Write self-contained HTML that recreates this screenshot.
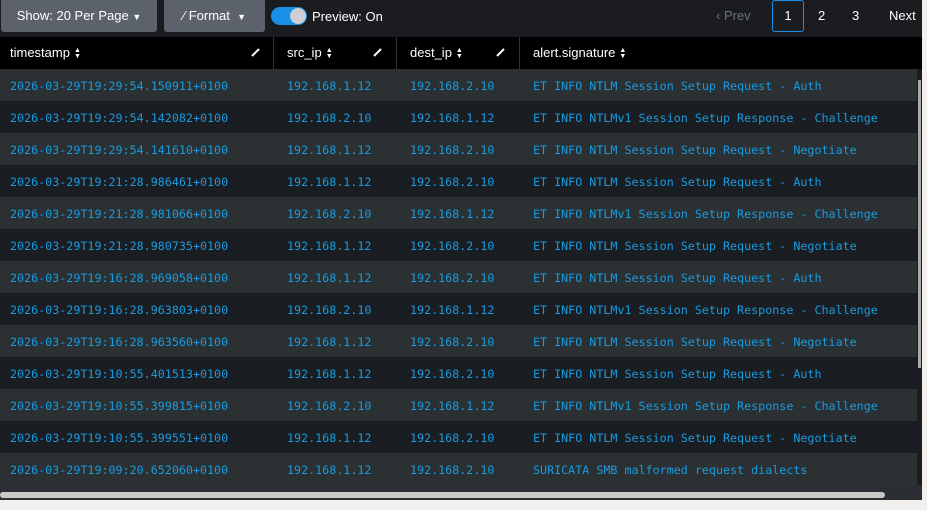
<!DOCTYPE html><html><head><style>
body{margin:0;width:927px;height:510px;background:#f2f0ee;overflow:hidden;font-family:"Liberation Sans",sans-serif}
#w{position:absolute;left:0;top:0;width:922px;height:500px;background:#1a1c20}
.btn{position:absolute;top:0;height:32px;background:#5b626b;border-radius:0 0 3px 3px;color:#fff;font-size:13px;line-height:32px;text-align:center}
#hd{position:absolute;top:37px;left:0;width:922px;height:32px;background:#000;color:#fff;font-size:13px}
.h{position:absolute;top:0;height:32px;line-height:32px;border-right:1px solid #333}
.r{position:absolute;left:0;width:917px;height:32px;font-family:"DejaVu Sans Mono","Liberation Mono",monospace;font-size:11.7px;color:#1a9be0;line-height:34px}
.r span{position:absolute}
.pen{position:absolute;top:10px;width:10px;height:10px}
.s{display:inline-block;vertical-align:middle;margin-left:4px;font-size:7px;line-height:6px}
</style></head><body><div id="w">
<div class="btn" style="left:1px;width:156px">Show: 20 Per Page <span style="font-size:9px">▼</span></div>
<div class="btn" style="left:164px;width:101px">⁄ Format &nbsp;<span style="font-size:9px">▼</span></div>
<div style="position:absolute;left:271px;top:7px;width:36px;height:18px;border-radius:9px;background:#1a8fe8"></div>
<div style="position:absolute;left:290px;top:8px;width:16px;height:16px;border-radius:8px;background:#ccd0d4"></div>
<div style="position:absolute;left:312px;top:9px;color:#fff;font-size:13px">Preview: On</div>
<div style="position:absolute;left:716px;top:8px;color:#6b7079;font-size:13px">‹ Prev</div>
<div style="position:absolute;left:772px;top:0;width:30px;height:30px;border:1px solid #1a8fe8;border-radius:3px;color:#fff;font-size:13px;line-height:30px;text-align:center">1</div>
<div style="position:absolute;left:818px;top:8px;color:#fff;font-size:13px">2</div>
<div style="position:absolute;left:852px;top:8px;color:#fff;font-size:13px">3</div>
<div style="position:absolute;left:889px;top:8px;color:#fff;font-size:13px">Next</div>
<div id="hd">
<div class="h" style="left:0;width:273px"><span style="margin-left:10px">timestamp</span><span class="s">▲<br>▼</span><svg class="pen" style="left:251px" viewBox="0 0 10 10"><path d="M1 9L8 2" stroke="#fff" stroke-width="2"/></svg></div>
<div class="h" style="left:274px;width:122px"><span style="margin-left:13px">src_ip</span><span class="s">▲<br>▼</span><svg class="pen" style="left:99px" viewBox="0 0 10 10"><path d="M1 9L8 2" stroke="#fff" stroke-width="2"/></svg></div>
<div class="h" style="left:397px;width:122px"><span style="margin-left:13px">dest_ip</span><span class="s">▲<br>▼</span><svg class="pen" style="left:99px" viewBox="0 0 10 10"><path d="M1 9L8 2" stroke="#fff" stroke-width="2"/></svg></div>
<div class="h" style="left:520px;width:400px;border:0"><span style="margin-left:13px">alert.signature</span><span class="s">▲<br>▼</span></div>
</div>
<div id="rows"></div>
<div style="position:absolute;left:0;top:485px;width:922px;height:15px;background:#2b2f33"></div>
<div style="position:absolute;left:0;top:492px;width:885px;height:6px;border-radius:3px;background:#c8c8c8"></div>
<div style="position:absolute;left:918px;top:80px;width:3px;height:288px;background:#aaa"></div>
</div>
<script>
var d=[["2026-03-29T19:29:54.150911+0100","192.168.1.12","192.168.2.10","ET INFO NTLM Session Setup Request - Auth"],
["2026-03-29T19:29:54.142082+0100","192.168.2.10","192.168.1.12","ET INFO NTLMv1 Session Setup Response - Challenge"],
["2026-03-29T19:29:54.141610+0100","192.168.1.12","192.168.2.10","ET INFO NTLM Session Setup Request - Negotiate"],
["2026-03-29T19:21:28.986461+0100","192.168.1.12","192.168.2.10","ET INFO NTLM Session Setup Request - Auth"],
["2026-03-29T19:21:28.981066+0100","192.168.2.10","192.168.1.12","ET INFO NTLMv1 Session Setup Response - Challenge"],
["2026-03-29T19:21:28.980735+0100","192.168.1.12","192.168.2.10","ET INFO NTLM Session Setup Request - Negotiate"],
["2026-03-29T19:16:28.969058+0100","192.168.1.12","192.168.2.10","ET INFO NTLM Session Setup Request - Auth"],
["2026-03-29T19:16:28.963803+0100","192.168.2.10","192.168.1.12","ET INFO NTLMv1 Session Setup Response - Challenge"],
["2026-03-29T19:16:28.963560+0100","192.168.1.12","192.168.2.10","ET INFO NTLM Session Setup Request - Negotiate"],
["2026-03-29T19:10:55.401513+0100","192.168.1.12","192.168.2.10","ET INFO NTLM Session Setup Request - Auth"],
["2026-03-29T19:10:55.399815+0100","192.168.2.10","192.168.1.12","ET INFO NTLMv1 Session Setup Response - Challenge"],
["2026-03-29T19:10:55.399551+0100","192.168.1.12","192.168.2.10","ET INFO NTLM Session Setup Request - Negotiate"],
["2026-03-29T19:09:20.652060+0100","192.168.1.12","192.168.2.10","SURICATA SMB malformed request dialects"]];
var h="";d.forEach(function(r,i){h+='<div class="r" style="top:'+(69+i*32)+'px;background:'+(i%2?'#1a1d21':'#2b3033')+'"><span style="left:10px">'+r[0]+'</span><span style="left:287px">'+r[1]+'</span><span style="left:410px">'+r[2]+'</span><span style="left:533px">'+r[3]+'</span></div>'});
document.getElementById("rows").innerHTML=h;
</script></body></html>
